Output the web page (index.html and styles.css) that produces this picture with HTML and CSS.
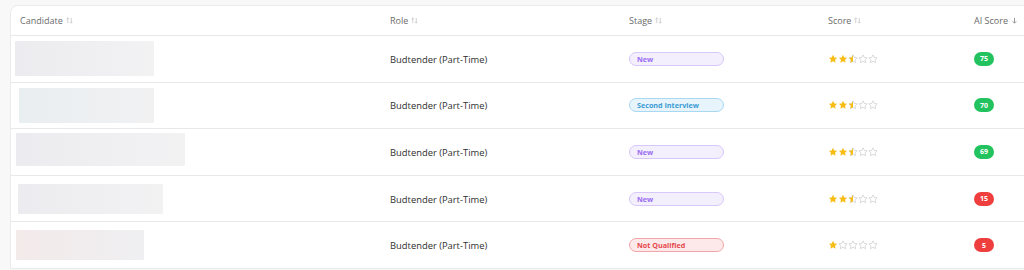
FILE: index.html
```html
<!DOCTYPE html>
<html>
<head>
<meta charset="utf-8">
<link rel="stylesheet" href="styles.css">
</head>
<body>
<svg class="defs" width="0" height="0" aria-hidden="true">
  <defs>
    <clipPath id="halfclip"><rect x="0" y="0" width="12" height="24"/></clipPath>
    <symbol id="star" viewBox="0 0 24 24"><path d="M12 2l3 6.3 6.9.9-5 4.8 1.3 6.8L12 17.5l-6.2 3.3L7.1 14l-5-4.8 6.9-.9z"/></symbol>
  </defs>
</svg>
<div class="card">
  <div class="row head">
    <div class="cell c1">Candidate <span class="sort"><svg viewBox="0 0 8 8"><path d="M2 7V1M0.6 2.4L2 1l1.4 1.4M6 1v6M4.6 5.6L6 7l1.4-1.4"/></svg></span></div>
    <div class="cell">Role <span class="sort"><svg viewBox="0 0 8 8"><path d="M2 7V1M0.6 2.4L2 1l1.4 1.4M6 1v6M4.6 5.6L6 7l1.4-1.4"/></svg></span></div>
    <div class="cell">Stage <span class="sort"><svg viewBox="0 0 8 8"><path d="M2 7V1M0.6 2.4L2 1l1.4 1.4M6 1v6M4.6 5.6L6 7l1.4-1.4"/></svg></span></div>
    <div class="cell">Score <span class="sort"><svg viewBox="0 0 8 8"><path d="M2 7V1M0.6 2.4L2 1l1.4 1.4M6 1v6M4.6 5.6L6 7l1.4-1.4"/></svg></span></div>
    <div class="cell">AI Score <span class="sort down"><svg viewBox="0 0 8 8"><path d="M4 1v6M2 5l2 2 2-2"/></svg></span></div>
  </div>

  <div class="row">
    <div class="cell c1"><div class="blur b1"></div></div>
    <div class="cell role">Budtender (Part-Time)</div>
    <div class="cell"><span class="pill new">New</span></div>
    <div class="cell"><div class="stars">
      <svg class="s on"><use href="#star"/></svg><svg class="s on"><use href="#star"/></svg><svg class="s half" viewBox="0 0 24 24"><path class="o" d="M12 2l3 6.3 6.9.9-5 4.8 1.3 6.8L12 17.5l-6.2 3.3L7.1 14l-5-4.8 6.9-.9z"/><path class="f" clip-path="url(#halfclip)" d="M12 2l3 6.3 6.9.9-5 4.8 1.3 6.8L12 17.5l-6.2 3.3L7.1 14l-5-4.8 6.9-.9z"/></svg><svg class="s off"><use href="#star"/></svg><svg class="s off"><use href="#star"/></svg>
    </div></div>
    <div class="cell"><span class="ai green">75</span></div>
  </div>

  <div class="row">
    <div class="cell c1"><div class="blur b2"></div></div>
    <div class="cell role">Budtender (Part-Time)</div>
    <div class="cell"><span class="pill second">Second Interview</span></div>
    <div class="cell"><div class="stars">
      <svg class="s on"><use href="#star"/></svg><svg class="s on"><use href="#star"/></svg><svg class="s half" viewBox="0 0 24 24"><path class="o" d="M12 2l3 6.3 6.9.9-5 4.8 1.3 6.8L12 17.5l-6.2 3.3L7.1 14l-5-4.8 6.9-.9z"/><path class="f" clip-path="url(#halfclip)" d="M12 2l3 6.3 6.9.9-5 4.8 1.3 6.8L12 17.5l-6.2 3.3L7.1 14l-5-4.8 6.9-.9z"/></svg><svg class="s off"><use href="#star"/></svg><svg class="s off"><use href="#star"/></svg>
    </div></div>
    <div class="cell"><span class="ai green">70</span></div>
  </div>

  <div class="row">
    <div class="cell c1"><div class="blur b3"></div></div>
    <div class="cell role">Budtender (Part-Time)</div>
    <div class="cell"><span class="pill new">New</span></div>
    <div class="cell"><div class="stars">
      <svg class="s on"><use href="#star"/></svg><svg class="s on"><use href="#star"/></svg><svg class="s half" viewBox="0 0 24 24"><path class="o" d="M12 2l3 6.3 6.9.9-5 4.8 1.3 6.8L12 17.5l-6.2 3.3L7.1 14l-5-4.8 6.9-.9z"/><path class="f" clip-path="url(#halfclip)" d="M12 2l3 6.3 6.9.9-5 4.8 1.3 6.8L12 17.5l-6.2 3.3L7.1 14l-5-4.8 6.9-.9z"/></svg><svg class="s off"><use href="#star"/></svg><svg class="s off"><use href="#star"/></svg>
    </div></div>
    <div class="cell"><span class="ai green">69</span></div>
  </div>

  <div class="row">
    <div class="cell c1"><div class="blur b4"></div></div>
    <div class="cell role">Budtender (Part-Time)</div>
    <div class="cell"><span class="pill new">New</span></div>
    <div class="cell"><div class="stars">
      <svg class="s on"><use href="#star"/></svg><svg class="s on"><use href="#star"/></svg><svg class="s half" viewBox="0 0 24 24"><path class="o" d="M12 2l3 6.3 6.9.9-5 4.8 1.3 6.8L12 17.5l-6.2 3.3L7.1 14l-5-4.8 6.9-.9z"/><path class="f" clip-path="url(#halfclip)" d="M12 2l3 6.3 6.9.9-5 4.8 1.3 6.8L12 17.5l-6.2 3.3L7.1 14l-5-4.8 6.9-.9z"/></svg><svg class="s off"><use href="#star"/></svg><svg class="s off"><use href="#star"/></svg>
    </div></div>
    <div class="cell"><span class="ai red">15</span></div>
  </div>

  <div class="row">
    <div class="cell c1"><div class="blur b5"></div></div>
    <div class="cell role">Budtender (Part-Time)</div>
    <div class="cell"><span class="pill nq">Not Qualified</span></div>
    <div class="cell"><div class="stars">
      <svg class="s on"><use href="#star"/></svg><svg class="s off"><use href="#star"/></svg><svg class="s off"><use href="#star"/></svg><svg class="s off"><use href="#star"/></svg><svg class="s off"><use href="#star"/></svg>
    </div></div>
    <div class="cell"><span class="ai red">5</span></div>
  </div>
</div>
</body>
</html>
```

FILE: styles.css
```css
html, body {
  margin: 0;
  padding: 0;
  overflow: hidden;
  background: #f8f8f8;
}
body {
  padding: 5px 0 0 10px;
  font-family: "Open Sans", "Segoe UI", Arial, sans-serif;
  color: #333;
}
.defs { position: absolute; width: 0; height: 0; }
.card {
  width: 1040px;
  background: #fff;
  border: 1px solid #ebebeb;
  border-radius: 8px 0 0 0;
}
.row {
  display: grid;
  grid-template-columns: 369px 239px 199px 146px 80px;
  height: 45.6px;
  align-items: center;
  border-top: 1px solid #e8e8ea;
}
.row.head {
  height: 29px;
  border-top: none;
  font-size: 9px;
  color: #6b6b6b;
}
.cell {
  padding-left: 10px;
  display: flex;
  align-items: center;
  height: 100%;
}
.row .c1 { padding-left: 4px; }
.row.head .c1 { padding-left: 9px; }
.sort {
  display: inline-flex;
  margin-left: 3px;
}
.sort svg {
  width: 7px;
  height: 7px;
  fill: none;
  stroke: #c4c4c4;
  stroke-width: 0.9;
}
.sort.down svg { stroke: #8a8a8a; stroke-width: 1; }
.role {
  font-size: 9.4px;
  color: #2f2f2f;
  padding-top: 1px;
}
.blur {
  border-radius: 1px;
  background: linear-gradient(90deg, #ececf0, #f2f2f3);
}
.b1 { width: 139px; height: 35px; margin-top: -1px; }
.b2 { width: 135px; height: 35px; margin-left: 4px; background: linear-gradient(90deg, #e9eef1, #f1f1f2); }
.b3 { width: 169px; height: 33px; margin-left: 1px; margin-top: -5px; }
.b4 { width: 145px; height: 30px; margin-left: 3px; }
.b5 { width: 128px; height: 30px; margin-left: 1px; background: linear-gradient(90deg, #f3eaea, #efeff1); }
.pill {
  box-sizing: border-box;
  width: 95px;
  height: 14px;
  border-radius: 7px;
  font-size: 7.2px;
  font-weight: 700;
  padding-left: 7px;
  display: flex;
  align-items: center;
  border: 1px solid;
}
.pill.new { background: #f3effd; border-color: #d7c7fb; color: #9a6cf2; }
.pill.second { background: #e7f4fc; border-color: #a8d8f2; color: #3a9bd3; }
.pill.nq { background: #fde9e9; border-color: #f3a5a8; color: #e5484d; }
.stars { display: flex; gap: 0; }
.s { width: 10px; height: 10px; }
.s.on { fill: #f7bd15; }
.s.off { fill: none; stroke: #c9c9c9; stroke-width: 1.6; }
.s.half .o { fill: none; stroke: #c9c9c9; stroke-width: 1.6; }
.s.half .f { fill: #f7bd15; }
.ai {
  min-width: 20px;
  height: 14px;
  box-sizing: border-box;
  padding: 0 4px;
  border-radius: 7px;
  color: #fff;
  font-size: 7px;
  font-weight: 700;
  display: flex;
  align-items: center;
  justify-content: center;
}
.ai.green { background: #22c35e; }
.ai.red { background: #ee3e3e; }
```
